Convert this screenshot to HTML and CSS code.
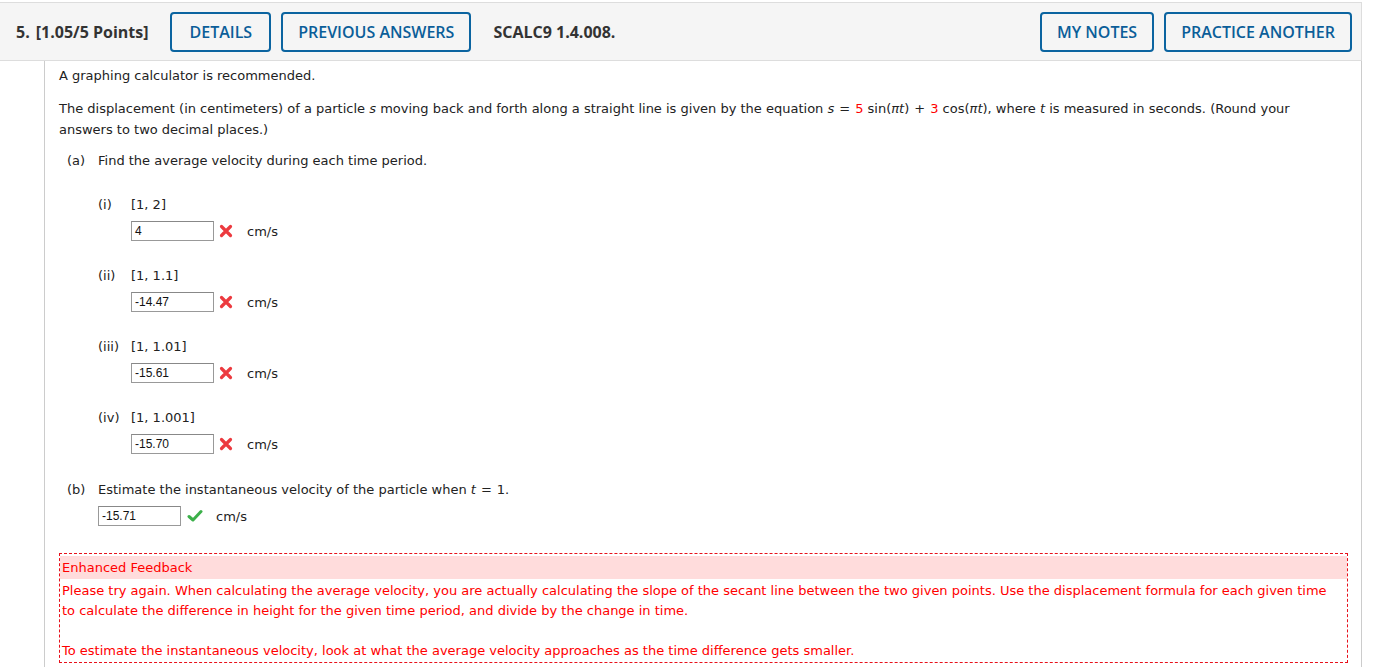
FILE: index.html
```html
<!DOCTYPE html>
<html>
<head>
<meta charset="utf-8">
<link rel="stylesheet" href="styles.css">
</head>
<body>
<div class="question">
  <div class="qhead">
    <span class="qnum">5.</span>
    <span class="qpts">[1.05/5 Points]</span>
    <button class="btn btn-details">DETAILS</button>
    <button class="btn">PREVIOUS ANSWERS</button>
    <span class="qcode">SCALC9 1.4.008.</span>
    <span class="spacer"></span>
    <button class="btn">MY NOTES</button>
    <button class="btn">PRACTICE ANOTHER</button>
  </div>
  <div class="qbody">
    <p class="intro">A graphing calculator is recommended.</p>
    <p class="prob">The displacement (in centimeters) of a particle <i>s</i> moving back and forth along a straight line is given by the equation <i>s</i><span class="op">=</span><span class="red">5</span> sin(<i>πt</i>)<span class="op">+</span><span class="red">3</span> cos(<i>πt</i>), where <i>t</i> is measured in seconds. (Round your answers to two decimal places.)</p>
    <div class="part">
      <div class="part-label"><span class="plab">(a)</span><span>Find the average velocity during each time period.</span></div>
      <div class="sub first">
        <div class="sub-label"><span class="slab">(i)</span><span>[1, 2]</span></div>
        <div class="answer">
          <span class="inp">4</span>
          <svg class="ico" viewBox="0 0 14 14"><path d="M2.5 2.5 L11.5 11.5 M11.5 2.5 L2.5 11.5" stroke="#ec3a3f" stroke-width="3.2" stroke-linecap="round"/></svg>
          <span class="unit">cm/s</span>
        </div>
      </div>
      <div class="sub">
        <div class="sub-label"><span class="slab">(ii)</span><span>[1, 1.1]</span></div>
        <div class="answer">
          <span class="inp">-14.47</span>
          <svg class="ico" viewBox="0 0 14 14"><path d="M2.5 2.5 L11.5 11.5 M11.5 2.5 L2.5 11.5" stroke="#ec3a3f" stroke-width="3.2" stroke-linecap="round"/></svg>
          <span class="unit">cm/s</span>
        </div>
      </div>
      <div class="sub">
        <div class="sub-label"><span class="slab">(iii)</span><span>[1, 1.01]</span></div>
        <div class="answer">
          <span class="inp">-15.61</span>
          <svg class="ico" viewBox="0 0 14 14"><path d="M2.5 2.5 L11.5 11.5 M11.5 2.5 L2.5 11.5" stroke="#ec3a3f" stroke-width="3.2" stroke-linecap="round"/></svg>
          <span class="unit">cm/s</span>
        </div>
      </div>
      <div class="sub">
        <div class="sub-label"><span class="slab">(iv)</span><span>[1, 1.001]</span></div>
        <div class="answer">
          <span class="inp">-15.70</span>
          <svg class="ico" viewBox="0 0 14 14"><path d="M2.5 2.5 L11.5 11.5 M11.5 2.5 L2.5 11.5" stroke="#ec3a3f" stroke-width="3.2" stroke-linecap="round"/></svg>
          <span class="unit">cm/s</span>
        </div>
      </div>
    </div>
    <div class="part partb">
      <div class="part-label"><span class="plab">(b)</span><span>Estimate the instantaneous velocity of the particle when <i>t</i><span class="op">=</span>1.</span></div>
      <div class="answer answer-b">
        <span class="inp">-15.71</span>
        <svg class="ico check" viewBox="0 0 16 14"><path d="M2 7.5 L6 11 L14 2.5" fill="none" stroke="#3cb04a" stroke-width="3" stroke-linecap="round" stroke-linejoin="round"/></svg>
        <span class="unit">cm/s</span>
      </div>
    </div>
    <div class="feedback">
      <div class="fb-head">Enhanced Feedback</div>
      <div class="fb-body">Please try again. When calculating the average velocity, you are actually calculating the slope of the secant line between the two given points. Use the displacement formula for each given time to calculate the difference in height for the given time period, and divide by the change in time.<br><br>To estimate the instantaneous velocity, look at what the average velocity approaches as the time difference gets smaller.</div>
    </div>
  </div>
</div>
</body>
</html>
```
FILE: styles.css
```css
html, body {
  margin: 0;
  padding: 0;
  background: #fff;
}
body {
  font-family: "DejaVu Sans", Verdana, sans-serif;
  font-size: 13px;
  color: #222;
}
.question {
  width: 1362px;
  padding-top: 2px;
}
.qhead {
  display: flex;
  align-items: center;
  height: 57px;
  background: #f5f5f5;
  border-top: 1px solid #ddd;
  border-bottom: 1px solid #ddd;
  border-right: 1px solid #ddd;
  padding: 0 9px 0 16px;
  font-family: "Open Sans", "Noto Sans", sans-serif;
  font-weight: 700;
  font-size: 16px;
  color: #333;
}
.qnum {
  margin-right: 6px;
}
.qpts {
  margin-right: 22px;
}
.btn {
  font-family: "Open Sans", "Noto Sans", sans-serif;
  font-weight: 600;
  font-size: 16px;
  color: #0b5e99;
  background: #f5f5f5;
  border: 2px solid #0b64a0;
  border-radius: 4px;
  height: 40px;
  padding: 0 15px;
  margin-right: 10px;
  letter-spacing: 0;
}
.btn-details {
  padding: 0 17px;
}
.qcode {
  margin-left: 12px;
}
.spacer {
  flex: 1;
}
.btn:last-child {
  margin-right: 0;
}
.qbody {
  margin-left: 44px;
  border-left: 1px solid #ccc;
  border-right: 1px solid #ccc;
  padding: 4px 13px 4px 14px;
}
p {
  margin: 0;
  line-height: 21px;
}
.prob {
  margin-top: 12px;
  padding-right: 30px;
}
.op {
  margin: 0 5px;
}
.red {
  color: #f00;
}
.part {
  margin-top: 10px;
}
.part-label {
  display: flex;
  line-height: 21px;
  padding-left: 8px;
}
.plab {
  width: 31px;
  flex: none;
}
.sub {
  margin-top: 24px;
  padding-left: 39px;
}
.sub.first {
  margin-top: 23px;
}
.sub-label {
  display: flex;
  line-height: 21px;
}
.slab {
  width: 33px;
  flex: none;
}
.answer {
  display: flex;
  align-items: center;
  margin-top: 6px;
  margin-left: 33px;
  height: 20px;
}
.inp {
  box-sizing: border-box;
  width: 83px;
  height: 20px;
  border: 1px solid #999;
  border-top-color: #888;
  font-family: "Liberation Sans", Arial, sans-serif;
  font-size: 12px;
  line-height: 18px;
  padding-left: 3px;
  color: #111;
  background: #fff;
}
.ico {
  width: 14px;
  height: 14px;
  margin-left: 5px;
  margin-right: 14px;
}
.check {
  width: 16px;
  margin-left: 6px;
  margin-right: 13px;
}
.unit {
  font-size: 13px;
}
.partb {
  margin-top: 25px;
}
.answer-b {
  margin-left: 39px;
}
.feedback {
  margin-top: 27px;
  border: 1px dashed #e8101a;
  color: #f00;
  padding-bottom: 1px;
}
.fb-head {
  margin-top: 2px;
  background: #ffdcdc;
  line-height: 23px;
  padding-left: 2px;
}
.fb-body {
  padding: 2px 20px 0 2px;
  line-height: 20px;
}
```
